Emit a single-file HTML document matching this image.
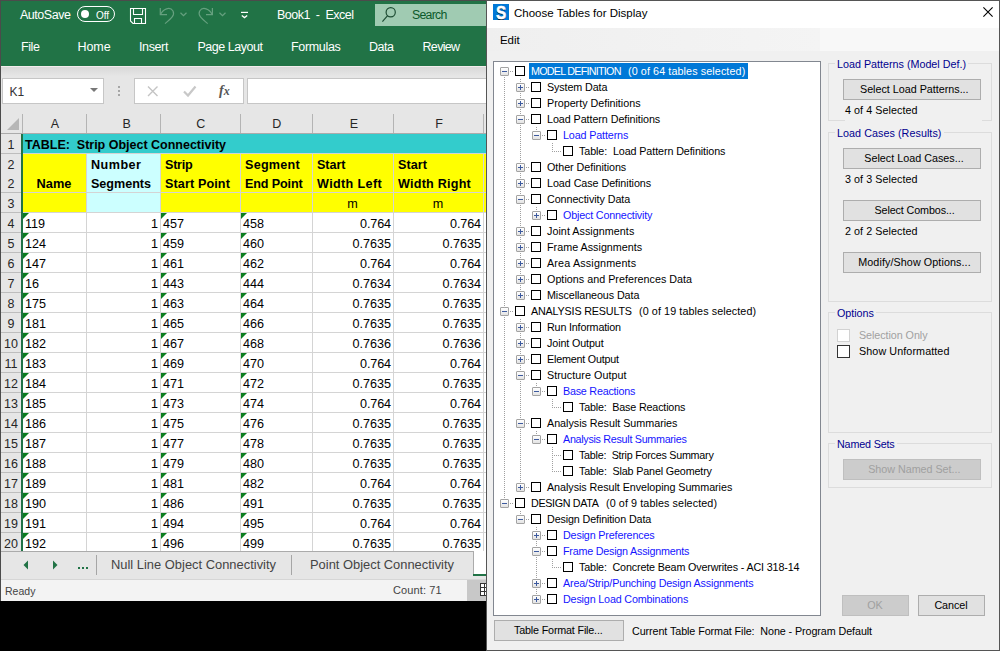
<!DOCTYPE html><html><head><meta charset="utf-8"><style>
html,body{margin:0;padding:0;}
body{width:1000px;height:651px;position:relative;overflow:hidden;background:#000;font-family:"Liberation Sans",sans-serif;}
.t{position:absolute;white-space:pre;}
.r{position:absolute;box-sizing:border-box;}
svg{position:absolute;}
</style></head><body>
<div class="r" style="left:0px;top:0px;width:1000px;height:1px;background:#4b4b4b;"></div>
<div class="r" style="left:0px;top:0px;width:1px;height:601px;background:#4b4b4b;"></div>
<div class="r" style="left:1px;top:1px;width:485px;height:65px;background:#217346;"></div>
<div class="t" style="left:20px;top:8.95px;font-size:12.5px;line-height:12.5px;color:#fff;letter-spacing:-0.465px;">AutoSave</div>
<div class="r" style="left:77px;top:6px;width:38px;height:16px;background:transparent;border:1px solid #fff;border-radius:8px;"></div>
<div class="r" style="left:81px;top:10px;width:8px;height:8px;background:#fff;border-radius:50%;"></div>
<div class="t" style="left:96px;top:10.50px;font-size:10px;line-height:10px;color:#fff;letter-spacing:-0.052px;">Off</div>
<svg style="left:125px;top:3px" width="25" height="25" viewBox="0 0 25 25"><path d="M5.5 5.5H20.5V20.5H8L5.5 18Z" fill="none" stroke="#fff" stroke-width="1.1"/><path d="M8.5 5.5V11.5H17.5V5.5" fill="none" stroke="#fff" stroke-width="1.1"/><path d="M9.5 20.5V15.5H16.5V20.5" fill="none" stroke="#fff" stroke-width="1.1"/></svg>
<svg style="left:155px;top:3px" width="75" height="25" viewBox="0 0 75 25"><g fill="none" stroke="#66a07f" stroke-width="1.2"><path d="M5.3 5V11.6H12"/><path d="M5.5 11.5C8 6 15 3 18 8C20 12 17 15 10 20.6"/><path d="M25.5 9.75L28.5 12.75L31.5 9.75"/><path d="M57.4 5V11.6H51"/><path d="M57.2 11.5C54.7 6 47.7 3 44.7 8C42.7 12 45.7 15 52.7 20.6"/><path d="M64.5 9.75L67.5 12.75L70.5 9.75"/></g></svg>
<svg style="left:235px;top:5px" width="20" height="20" viewBox="0 0 20 20"><path d="M6 7.4H13" stroke="#fff" stroke-width="1.2"/><path d="M6.8 10.5L9.5 12.6L12.2 10.5" fill="none" stroke="#fff" stroke-width="1.3"/></svg>
<div class="t" style="left:277px;top:8.95px;font-size:12.5px;line-height:12.5px;color:#fff;letter-spacing:-0.505px;">Book1  -  Excel</div>
<div class="r" style="left:375px;top:4px;width:111px;height:22px;background:#a0cbb2;"></div>
<svg style="left:381px;top:5px" width="18" height="19" viewBox="0 0 18 19"><circle cx="9.7" cy="7.2" r="4.6" fill="none" stroke="#1e4d34" stroke-width="1.2"/><path d="M6.6 10.6L1.4 16.6" stroke="#1e4d34" stroke-width="1.2"/></svg>
<div class="t" style="left:412px;top:9.35px;font-size:12.3px;line-height:12.3px;color:#0c5a2b;letter-spacing:-0.745px;">Search</div>
<div class="t" style="left:21px;top:40.55px;font-size:12.5px;line-height:12.5px;color:#fff;letter-spacing:-0.414px;">File</div>
<div class="t" style="left:77.5px;top:40.55px;font-size:12.5px;line-height:12.5px;color:#fff;letter-spacing:-0.086px;">Home</div>
<div class="t" style="left:139px;top:40.55px;font-size:12.5px;line-height:12.5px;color:#fff;letter-spacing:-0.378px;">Insert</div>
<div class="t" style="left:197.5px;top:40.55px;font-size:12.5px;line-height:12.5px;color:#fff;letter-spacing:-0.473px;">Page Layout</div>
<div class="t" style="left:291px;top:40.55px;font-size:12.5px;line-height:12.5px;color:#fff;letter-spacing:-0.324px;">Formulas</div>
<div class="t" style="left:369px;top:40.55px;font-size:12.5px;line-height:12.5px;color:#fff;letter-spacing:-0.477px;">Data</div>
<div class="t" style="left:422.5px;top:40.55px;font-size:12.5px;line-height:12.5px;color:#fff;letter-spacing:-0.667px;">Review</div>
<div class="r" style="left:1px;top:66px;width:485px;height:48px;background:#e6e6e6;"></div>
<div class="r" style="left:1px;top:66px;width:485px;height:1px;background:#f2ecec;"></div>
<div class="r" style="left:1px;top:67px;width:485px;height:9px;background:linear-gradient(#d8d8d8,#e6e6e6)"></div>
<div class="r" style="left:2px;top:78px;width:102px;height:26px;background:#fff;border:1px solid #c6c6c6;"></div>
<div class="t" style="left:9.5px;top:85.50px;font-size:12px;line-height:12px;color:#333;">K1</div>
<svg style="left:89px;top:87px" width="10" height="6" viewBox="0 0 10 6"><path d="M1 1h8l-4 4z" fill="#777"/></svg>
<div class="r" style="left:118px;top:86px;width:2px;height:2px;background:#a6a6a6;"></div>
<div class="r" style="left:118px;top:90px;width:2px;height:2px;background:#a6a6a6;"></div>
<div class="r" style="left:118px;top:94px;width:2px;height:2px;background:#a6a6a6;"></div>
<div class="r" style="left:134px;top:78px;width:110px;height:26px;background:#fff;border:1px solid #c6c6c6;"></div>
<svg style="left:146px;top:84px" width="14" height="14" viewBox="0 0 14 14"><path d="M2 2.5l9.5 9.5M11.5 2.5L2 12" stroke="#c4c4c4" stroke-width="1.4"/></svg>
<svg style="left:181px;top:84px" width="16" height="14" viewBox="0 0 16 14"><path d="M3 7.5l4 4L14.5 2.5" fill="none" stroke="#c8c8c8" stroke-width="2.2"/></svg>
<div class="t" style="left:219px;top:84.00px;font-size:14px;line-height:14px;color:#555;font-weight:bold;font-style:italic;font-family:'Liberation Serif',serif;">f<span style="font-size:12px">x</span></div>
<div class="r" style="left:247px;top:78px;width:240px;height:26px;background:#fff;border:1px solid #c6c6c6;"></div>
<div class="r" style="left:1px;top:114px;width:485px;height:20px;background:#e6e6e6;"></div>
<div class="r" style="left:1px;top:133px;width:485px;height:1px;background:#ababab;"></div>
<svg style="left:6px;top:117px" width="14" height="14" viewBox="0 0 14 14"><path d="M13 1v12H1z" fill="#b6b6b6"/></svg>
<div class="r" style="left:22px;top:114px;width:1px;height:19px;background:#b4b4b4;"></div>
<div class="r" style="left:86px;top:114px;width:1px;height:19px;background:#b4b4b4;"></div>
<div class="r" style="left:160px;top:114px;width:1px;height:19px;background:#b4b4b4;"></div>
<div class="r" style="left:240px;top:114px;width:1px;height:19px;background:#b4b4b4;"></div>
<div class="r" style="left:312px;top:114px;width:1px;height:19px;background:#b4b4b4;"></div>
<div class="r" style="left:393px;top:114px;width:1px;height:19px;background:#b4b4b4;"></div>
<div class="r" style="left:483px;top:114px;width:1px;height:19px;background:#b4b4b4;"></div>
<div class="t" style="left:23.5px;top:118.25px;font-size:12.5px;line-height:12.5px;color:#262626;width:63px;text-align:center;">A</div>
<div class="t" style="left:90.2px;top:118.25px;font-size:12.5px;line-height:12.5px;color:#262626;width:73px;text-align:center;">B</div>
<div class="t" style="left:161.3px;top:118.25px;font-size:12.5px;line-height:12.5px;color:#262626;width:79px;text-align:center;">C</div>
<div class="t" style="left:241.2px;top:118.25px;font-size:12.5px;line-height:12.5px;color:#262626;width:71px;text-align:center;">D</div>
<div class="t" style="left:314px;top:118.25px;font-size:12.5px;line-height:12.5px;color:#262626;width:80px;text-align:center;">E</div>
<div class="t" style="left:394.5px;top:118.25px;font-size:12.5px;line-height:12.5px;color:#262626;width:89px;text-align:center;">F</div>
<div class="r" style="left:1px;top:134px;width:21px;height:418px;background:#e6e6e6;"></div>
<div class="r" style="left:21px;top:134px;width:1px;height:418px;background:#bdbdbd;"></div>
<div class="r" style="left:22px;top:134px;width:464px;height:418px;background:#fff;"></div>
<div class="r" style="left:22px;top:134px;width:464px;height:19px;background:#33cccc;"></div>
<div class="r" style="left:22px;top:154px;width:464px;height:38px;background:#ffff00;"></div>
<div class="r" style="left:86px;top:154px;width:74px;height:38px;background:#ccffff;"></div>
<div class="r" style="left:22px;top:193px;width:464px;height:19px;background:#ffff00;"></div>
<div class="r" style="left:86px;top:193px;width:74px;height:19px;background:#ccffff;"></div>
<div class="r" style="left:22px;top:153px;width:464px;height:1px;background:#d4d4d4;"></div>
<div class="r" style="left:1px;top:153px;width:21px;height:1px;background:#bdbdbd;"></div>
<div class="r" style="left:22px;top:192px;width:464px;height:1px;background:#d4d4d4;"></div>
<div class="r" style="left:1px;top:192px;width:21px;height:1px;background:#bdbdbd;"></div>
<div class="r" style="left:22px;top:212px;width:464px;height:1px;background:#d4d4d4;"></div>
<div class="r" style="left:1px;top:212px;width:21px;height:1px;background:#bdbdbd;"></div>
<div class="r" style="left:22px;top:232px;width:464px;height:1px;background:#d4d4d4;"></div>
<div class="r" style="left:1px;top:232px;width:21px;height:1px;background:#bdbdbd;"></div>
<div class="r" style="left:22px;top:252px;width:464px;height:1px;background:#d4d4d4;"></div>
<div class="r" style="left:1px;top:252px;width:21px;height:1px;background:#bdbdbd;"></div>
<div class="r" style="left:22px;top:272px;width:464px;height:1px;background:#d4d4d4;"></div>
<div class="r" style="left:1px;top:272px;width:21px;height:1px;background:#bdbdbd;"></div>
<div class="r" style="left:22px;top:292px;width:464px;height:1px;background:#d4d4d4;"></div>
<div class="r" style="left:1px;top:292px;width:21px;height:1px;background:#bdbdbd;"></div>
<div class="r" style="left:22px;top:312px;width:464px;height:1px;background:#d4d4d4;"></div>
<div class="r" style="left:1px;top:312px;width:21px;height:1px;background:#bdbdbd;"></div>
<div class="r" style="left:22px;top:332px;width:464px;height:1px;background:#d4d4d4;"></div>
<div class="r" style="left:1px;top:332px;width:21px;height:1px;background:#bdbdbd;"></div>
<div class="r" style="left:22px;top:352px;width:464px;height:1px;background:#d4d4d4;"></div>
<div class="r" style="left:1px;top:352px;width:21px;height:1px;background:#bdbdbd;"></div>
<div class="r" style="left:22px;top:372px;width:464px;height:1px;background:#d4d4d4;"></div>
<div class="r" style="left:1px;top:372px;width:21px;height:1px;background:#bdbdbd;"></div>
<div class="r" style="left:22px;top:392px;width:464px;height:1px;background:#d4d4d4;"></div>
<div class="r" style="left:1px;top:392px;width:21px;height:1px;background:#bdbdbd;"></div>
<div class="r" style="left:22px;top:412px;width:464px;height:1px;background:#d4d4d4;"></div>
<div class="r" style="left:1px;top:412px;width:21px;height:1px;background:#bdbdbd;"></div>
<div class="r" style="left:22px;top:432px;width:464px;height:1px;background:#d4d4d4;"></div>
<div class="r" style="left:1px;top:432px;width:21px;height:1px;background:#bdbdbd;"></div>
<div class="r" style="left:22px;top:452px;width:464px;height:1px;background:#d4d4d4;"></div>
<div class="r" style="left:1px;top:452px;width:21px;height:1px;background:#bdbdbd;"></div>
<div class="r" style="left:22px;top:472px;width:464px;height:1px;background:#d4d4d4;"></div>
<div class="r" style="left:1px;top:472px;width:21px;height:1px;background:#bdbdbd;"></div>
<div class="r" style="left:22px;top:492px;width:464px;height:1px;background:#d4d4d4;"></div>
<div class="r" style="left:1px;top:492px;width:21px;height:1px;background:#bdbdbd;"></div>
<div class="r" style="left:22px;top:512px;width:464px;height:1px;background:#d4d4d4;"></div>
<div class="r" style="left:1px;top:512px;width:21px;height:1px;background:#bdbdbd;"></div>
<div class="r" style="left:22px;top:532px;width:464px;height:1px;background:#d4d4d4;"></div>
<div class="r" style="left:1px;top:532px;width:21px;height:1px;background:#bdbdbd;"></div>
<div class="r" style="left:22px;top:552px;width:464px;height:1px;background:#d4d4d4;"></div>
<div class="r" style="left:1px;top:552px;width:21px;height:1px;background:#bdbdbd;"></div>
<div class="r" style="left:86px;top:154px;width:1px;height:398px;background:#d4d4d4;"></div>
<div class="r" style="left:160px;top:154px;width:1px;height:398px;background:#d4d4d4;"></div>
<div class="r" style="left:240px;top:154px;width:1px;height:398px;background:#d4d4d4;"></div>
<div class="r" style="left:312px;top:154px;width:1px;height:398px;background:#d4d4d4;"></div>
<div class="r" style="left:393px;top:154px;width:1px;height:398px;background:#d4d4d4;"></div>
<div class="r" style="left:483px;top:154px;width:1px;height:398px;background:#d4d4d4;"></div>
<div class="t" style="left:1px;top:139.45px;font-size:12.5px;line-height:12.5px;color:#262626;width:20px;text-align:center;">1</div>
<div class="t" style="left:1px;top:159.25px;font-size:12.5px;line-height:12.5px;color:#262626;width:20px;text-align:center;">2</div>
<div class="t" style="left:1px;top:178.25px;font-size:12.5px;line-height:12.5px;color:#262626;width:20px;text-align:center;">2</div>
<div class="t" style="left:1px;top:198.45px;font-size:12.5px;line-height:12.5px;color:#262626;width:20px;text-align:center;">3</div>
<div class="t" style="left:1px;top:218.45px;font-size:12.5px;line-height:12.5px;color:#262626;width:20px;text-align:center;">4</div>
<div class="t" style="left:1px;top:238.45px;font-size:12.5px;line-height:12.5px;color:#262626;width:20px;text-align:center;">5</div>
<div class="t" style="left:1px;top:258.45px;font-size:12.5px;line-height:12.5px;color:#262626;width:20px;text-align:center;">6</div>
<div class="t" style="left:1px;top:278.45px;font-size:12.5px;line-height:12.5px;color:#262626;width:20px;text-align:center;">7</div>
<div class="t" style="left:1px;top:298.45px;font-size:12.5px;line-height:12.5px;color:#262626;width:20px;text-align:center;">8</div>
<div class="t" style="left:1px;top:318.45px;font-size:12.5px;line-height:12.5px;color:#262626;width:20px;text-align:center;">9</div>
<div class="t" style="left:1px;top:338.45px;font-size:12.5px;line-height:12.5px;color:#262626;width:20px;text-align:center;">10</div>
<div class="t" style="left:1px;top:358.45px;font-size:12.5px;line-height:12.5px;color:#262626;width:20px;text-align:center;">11</div>
<div class="t" style="left:1px;top:378.45px;font-size:12.5px;line-height:12.5px;color:#262626;width:20px;text-align:center;">12</div>
<div class="t" style="left:1px;top:398.45px;font-size:12.5px;line-height:12.5px;color:#262626;width:20px;text-align:center;">13</div>
<div class="t" style="left:1px;top:418.45px;font-size:12.5px;line-height:12.5px;color:#262626;width:20px;text-align:center;">14</div>
<div class="t" style="left:1px;top:438.45px;font-size:12.5px;line-height:12.5px;color:#262626;width:20px;text-align:center;">15</div>
<div class="t" style="left:1px;top:458.45px;font-size:12.5px;line-height:12.5px;color:#262626;width:20px;text-align:center;">16</div>
<div class="t" style="left:1px;top:478.45px;font-size:12.5px;line-height:12.5px;color:#262626;width:20px;text-align:center;">17</div>
<div class="t" style="left:1px;top:498.45px;font-size:12.5px;line-height:12.5px;color:#262626;width:20px;text-align:center;">18</div>
<div class="t" style="left:1px;top:518.45px;font-size:12.5px;line-height:12.5px;color:#262626;width:20px;text-align:center;">19</div>
<div class="t" style="left:1px;top:538.45px;font-size:12.5px;line-height:12.5px;color:#262626;width:20px;text-align:center;">20</div>
<div class="t" style="left:25px;top:139.25px;font-size:12.5px;line-height:12.5px;color:#000;font-weight:bold;letter-spacing:-0.005px;">TABLE:  Strip Object Connectivity</div>
<div class="t" style="left:22px;top:178.10px;font-size:12.8px;line-height:12.8px;color:#000;font-weight:bold;width:64px;text-align:center;letter-spacing:0.035px;">Name</div>
<div class="t" style="left:91px;top:158.70px;font-size:12.6px;line-height:12.6px;color:#000;font-weight:bold;letter-spacing:0.484px;">Number</div>
<div class="t" style="left:91px;top:178.20px;font-size:12.6px;line-height:12.6px;color:#000;font-weight:bold;letter-spacing:-0.025px;">Segments</div>
<div class="t" style="left:165px;top:158.70px;font-size:12.6px;line-height:12.6px;color:#000;font-weight:bold;letter-spacing:-0.237px;">Strip</div>
<div class="t" style="left:165px;top:178.20px;font-size:12.6px;line-height:12.6px;color:#000;font-weight:bold;letter-spacing:0.121px;">Start Point</div>
<div class="t" style="left:245px;top:158.70px;font-size:12.6px;line-height:12.6px;color:#000;font-weight:bold;letter-spacing:0.259px;">Segment</div>
<div class="t" style="left:245px;top:178.20px;font-size:12.6px;line-height:12.6px;color:#000;font-weight:bold;letter-spacing:-0.141px;">End Point</div>
<div class="t" style="left:317px;top:158.70px;font-size:12.6px;line-height:12.6px;color:#000;font-weight:bold;letter-spacing:-0.041px;">Start</div>
<div class="t" style="left:317px;top:178.20px;font-size:12.6px;line-height:12.6px;color:#000;font-weight:bold;letter-spacing:0.355px;">Width Left</div>
<div class="t" style="left:398px;top:158.70px;font-size:12.6px;line-height:12.6px;color:#000;font-weight:bold;letter-spacing:0.059px;">Start</div>
<div class="t" style="left:398px;top:178.20px;font-size:12.6px;line-height:12.6px;color:#000;font-weight:bold;letter-spacing:0.224px;">Width Right</div>
<div class="t" style="left:312px;top:197.70px;font-size:12.6px;line-height:12.6px;color:#000;width:81px;text-align:center;">m</div>
<div class="t" style="left:393px;top:197.70px;font-size:12.6px;line-height:12.6px;color:#000;width:90px;text-align:center;">m</div>
<div class="t" style="left:25px;top:217.70px;font-size:12.6px;line-height:12.6px;color:#000;">119</div>
<div class="t" style="left:86px;top:217.70px;font-size:12.6px;line-height:12.6px;color:#000;width:72px;text-align:right;">1</div>
<div class="t" style="left:163px;top:217.70px;font-size:12.6px;line-height:12.6px;color:#000;">457</div>
<div class="t" style="left:243px;top:217.70px;font-size:12.6px;line-height:12.6px;color:#000;">458</div>
<div class="t" style="left:312px;top:217.70px;font-size:12.6px;line-height:12.6px;color:#000;width:79px;text-align:right;letter-spacing:-0.103px;">0.764</div>
<div class="t" style="left:393px;top:217.70px;font-size:12.6px;line-height:12.6px;color:#000;width:88px;text-align:right;letter-spacing:-0.103px;">0.764</div>
<svg style="left:23px;top:213px" width="7" height="7" viewBox="0 0 7 7"><path d="M0 0h6L0 6z" fill="#0b7d1f"/></svg>
<svg style="left:161px;top:213px" width="7" height="7" viewBox="0 0 7 7"><path d="M0 0h6L0 6z" fill="#0b7d1f"/></svg>
<svg style="left:241px;top:213px" width="7" height="7" viewBox="0 0 7 7"><path d="M0 0h6L0 6z" fill="#0b7d1f"/></svg>
<div class="t" style="left:25px;top:237.70px;font-size:12.6px;line-height:12.6px;color:#000;">124</div>
<div class="t" style="left:86px;top:237.70px;font-size:12.6px;line-height:12.6px;color:#000;width:72px;text-align:right;">1</div>
<div class="t" style="left:163px;top:237.70px;font-size:12.6px;line-height:12.6px;color:#000;">459</div>
<div class="t" style="left:243px;top:237.70px;font-size:12.6px;line-height:12.6px;color:#000;">460</div>
<div class="t" style="left:312px;top:237.70px;font-size:12.6px;line-height:12.6px;color:#000;width:79px;text-align:right;letter-spacing:-0.005px;">0.7635</div>
<div class="t" style="left:393px;top:237.70px;font-size:12.6px;line-height:12.6px;color:#000;width:88px;text-align:right;letter-spacing:-0.005px;">0.7635</div>
<svg style="left:23px;top:233px" width="7" height="7" viewBox="0 0 7 7"><path d="M0 0h6L0 6z" fill="#0b7d1f"/></svg>
<svg style="left:161px;top:233px" width="7" height="7" viewBox="0 0 7 7"><path d="M0 0h6L0 6z" fill="#0b7d1f"/></svg>
<svg style="left:241px;top:233px" width="7" height="7" viewBox="0 0 7 7"><path d="M0 0h6L0 6z" fill="#0b7d1f"/></svg>
<div class="t" style="left:25px;top:257.70px;font-size:12.6px;line-height:12.6px;color:#000;">147</div>
<div class="t" style="left:86px;top:257.70px;font-size:12.6px;line-height:12.6px;color:#000;width:72px;text-align:right;">1</div>
<div class="t" style="left:163px;top:257.70px;font-size:12.6px;line-height:12.6px;color:#000;">461</div>
<div class="t" style="left:243px;top:257.70px;font-size:12.6px;line-height:12.6px;color:#000;">462</div>
<div class="t" style="left:312px;top:257.70px;font-size:12.6px;line-height:12.6px;color:#000;width:79px;text-align:right;letter-spacing:-0.103px;">0.764</div>
<div class="t" style="left:393px;top:257.70px;font-size:12.6px;line-height:12.6px;color:#000;width:88px;text-align:right;letter-spacing:-0.103px;">0.764</div>
<svg style="left:23px;top:253px" width="7" height="7" viewBox="0 0 7 7"><path d="M0 0h6L0 6z" fill="#0b7d1f"/></svg>
<svg style="left:161px;top:253px" width="7" height="7" viewBox="0 0 7 7"><path d="M0 0h6L0 6z" fill="#0b7d1f"/></svg>
<svg style="left:241px;top:253px" width="7" height="7" viewBox="0 0 7 7"><path d="M0 0h6L0 6z" fill="#0b7d1f"/></svg>
<div class="t" style="left:25px;top:277.70px;font-size:12.6px;line-height:12.6px;color:#000;">16</div>
<div class="t" style="left:86px;top:277.70px;font-size:12.6px;line-height:12.6px;color:#000;width:72px;text-align:right;">1</div>
<div class="t" style="left:163px;top:277.70px;font-size:12.6px;line-height:12.6px;color:#000;">443</div>
<div class="t" style="left:243px;top:277.70px;font-size:12.6px;line-height:12.6px;color:#000;">444</div>
<div class="t" style="left:312px;top:277.70px;font-size:12.6px;line-height:12.6px;color:#000;width:79px;text-align:right;letter-spacing:-0.005px;">0.7634</div>
<div class="t" style="left:393px;top:277.70px;font-size:12.6px;line-height:12.6px;color:#000;width:88px;text-align:right;letter-spacing:-0.005px;">0.7634</div>
<svg style="left:23px;top:273px" width="7" height="7" viewBox="0 0 7 7"><path d="M0 0h6L0 6z" fill="#0b7d1f"/></svg>
<svg style="left:161px;top:273px" width="7" height="7" viewBox="0 0 7 7"><path d="M0 0h6L0 6z" fill="#0b7d1f"/></svg>
<svg style="left:241px;top:273px" width="7" height="7" viewBox="0 0 7 7"><path d="M0 0h6L0 6z" fill="#0b7d1f"/></svg>
<div class="t" style="left:25px;top:297.70px;font-size:12.6px;line-height:12.6px;color:#000;">175</div>
<div class="t" style="left:86px;top:297.70px;font-size:12.6px;line-height:12.6px;color:#000;width:72px;text-align:right;">1</div>
<div class="t" style="left:163px;top:297.70px;font-size:12.6px;line-height:12.6px;color:#000;">463</div>
<div class="t" style="left:243px;top:297.70px;font-size:12.6px;line-height:12.6px;color:#000;">464</div>
<div class="t" style="left:312px;top:297.70px;font-size:12.6px;line-height:12.6px;color:#000;width:79px;text-align:right;letter-spacing:-0.005px;">0.7635</div>
<div class="t" style="left:393px;top:297.70px;font-size:12.6px;line-height:12.6px;color:#000;width:88px;text-align:right;letter-spacing:-0.005px;">0.7635</div>
<svg style="left:23px;top:293px" width="7" height="7" viewBox="0 0 7 7"><path d="M0 0h6L0 6z" fill="#0b7d1f"/></svg>
<svg style="left:161px;top:293px" width="7" height="7" viewBox="0 0 7 7"><path d="M0 0h6L0 6z" fill="#0b7d1f"/></svg>
<svg style="left:241px;top:293px" width="7" height="7" viewBox="0 0 7 7"><path d="M0 0h6L0 6z" fill="#0b7d1f"/></svg>
<div class="t" style="left:25px;top:317.70px;font-size:12.6px;line-height:12.6px;color:#000;">181</div>
<div class="t" style="left:86px;top:317.70px;font-size:12.6px;line-height:12.6px;color:#000;width:72px;text-align:right;">1</div>
<div class="t" style="left:163px;top:317.70px;font-size:12.6px;line-height:12.6px;color:#000;">465</div>
<div class="t" style="left:243px;top:317.70px;font-size:12.6px;line-height:12.6px;color:#000;">466</div>
<div class="t" style="left:312px;top:317.70px;font-size:12.6px;line-height:12.6px;color:#000;width:79px;text-align:right;letter-spacing:-0.005px;">0.7635</div>
<div class="t" style="left:393px;top:317.70px;font-size:12.6px;line-height:12.6px;color:#000;width:88px;text-align:right;letter-spacing:-0.005px;">0.7635</div>
<svg style="left:23px;top:313px" width="7" height="7" viewBox="0 0 7 7"><path d="M0 0h6L0 6z" fill="#0b7d1f"/></svg>
<svg style="left:161px;top:313px" width="7" height="7" viewBox="0 0 7 7"><path d="M0 0h6L0 6z" fill="#0b7d1f"/></svg>
<svg style="left:241px;top:313px" width="7" height="7" viewBox="0 0 7 7"><path d="M0 0h6L0 6z" fill="#0b7d1f"/></svg>
<div class="t" style="left:25px;top:337.70px;font-size:12.6px;line-height:12.6px;color:#000;">182</div>
<div class="t" style="left:86px;top:337.70px;font-size:12.6px;line-height:12.6px;color:#000;width:72px;text-align:right;">1</div>
<div class="t" style="left:163px;top:337.70px;font-size:12.6px;line-height:12.6px;color:#000;">467</div>
<div class="t" style="left:243px;top:337.70px;font-size:12.6px;line-height:12.6px;color:#000;">468</div>
<div class="t" style="left:312px;top:337.70px;font-size:12.6px;line-height:12.6px;color:#000;width:79px;text-align:right;letter-spacing:-0.005px;">0.7636</div>
<div class="t" style="left:393px;top:337.70px;font-size:12.6px;line-height:12.6px;color:#000;width:88px;text-align:right;letter-spacing:-0.005px;">0.7636</div>
<svg style="left:23px;top:333px" width="7" height="7" viewBox="0 0 7 7"><path d="M0 0h6L0 6z" fill="#0b7d1f"/></svg>
<svg style="left:161px;top:333px" width="7" height="7" viewBox="0 0 7 7"><path d="M0 0h6L0 6z" fill="#0b7d1f"/></svg>
<svg style="left:241px;top:333px" width="7" height="7" viewBox="0 0 7 7"><path d="M0 0h6L0 6z" fill="#0b7d1f"/></svg>
<div class="t" style="left:25px;top:357.70px;font-size:12.6px;line-height:12.6px;color:#000;">183</div>
<div class="t" style="left:86px;top:357.70px;font-size:12.6px;line-height:12.6px;color:#000;width:72px;text-align:right;">1</div>
<div class="t" style="left:163px;top:357.70px;font-size:12.6px;line-height:12.6px;color:#000;">469</div>
<div class="t" style="left:243px;top:357.70px;font-size:12.6px;line-height:12.6px;color:#000;">470</div>
<div class="t" style="left:312px;top:357.70px;font-size:12.6px;line-height:12.6px;color:#000;width:79px;text-align:right;letter-spacing:-0.103px;">0.764</div>
<div class="t" style="left:393px;top:357.70px;font-size:12.6px;line-height:12.6px;color:#000;width:88px;text-align:right;letter-spacing:-0.103px;">0.764</div>
<svg style="left:23px;top:353px" width="7" height="7" viewBox="0 0 7 7"><path d="M0 0h6L0 6z" fill="#0b7d1f"/></svg>
<svg style="left:161px;top:353px" width="7" height="7" viewBox="0 0 7 7"><path d="M0 0h6L0 6z" fill="#0b7d1f"/></svg>
<svg style="left:241px;top:353px" width="7" height="7" viewBox="0 0 7 7"><path d="M0 0h6L0 6z" fill="#0b7d1f"/></svg>
<div class="t" style="left:25px;top:377.70px;font-size:12.6px;line-height:12.6px;color:#000;">184</div>
<div class="t" style="left:86px;top:377.70px;font-size:12.6px;line-height:12.6px;color:#000;width:72px;text-align:right;">1</div>
<div class="t" style="left:163px;top:377.70px;font-size:12.6px;line-height:12.6px;color:#000;">471</div>
<div class="t" style="left:243px;top:377.70px;font-size:12.6px;line-height:12.6px;color:#000;">472</div>
<div class="t" style="left:312px;top:377.70px;font-size:12.6px;line-height:12.6px;color:#000;width:79px;text-align:right;letter-spacing:-0.005px;">0.7635</div>
<div class="t" style="left:393px;top:377.70px;font-size:12.6px;line-height:12.6px;color:#000;width:88px;text-align:right;letter-spacing:-0.005px;">0.7635</div>
<svg style="left:23px;top:373px" width="7" height="7" viewBox="0 0 7 7"><path d="M0 0h6L0 6z" fill="#0b7d1f"/></svg>
<svg style="left:161px;top:373px" width="7" height="7" viewBox="0 0 7 7"><path d="M0 0h6L0 6z" fill="#0b7d1f"/></svg>
<svg style="left:241px;top:373px" width="7" height="7" viewBox="0 0 7 7"><path d="M0 0h6L0 6z" fill="#0b7d1f"/></svg>
<div class="t" style="left:25px;top:397.70px;font-size:12.6px;line-height:12.6px;color:#000;">185</div>
<div class="t" style="left:86px;top:397.70px;font-size:12.6px;line-height:12.6px;color:#000;width:72px;text-align:right;">1</div>
<div class="t" style="left:163px;top:397.70px;font-size:12.6px;line-height:12.6px;color:#000;">473</div>
<div class="t" style="left:243px;top:397.70px;font-size:12.6px;line-height:12.6px;color:#000;">474</div>
<div class="t" style="left:312px;top:397.70px;font-size:12.6px;line-height:12.6px;color:#000;width:79px;text-align:right;letter-spacing:-0.103px;">0.764</div>
<div class="t" style="left:393px;top:397.70px;font-size:12.6px;line-height:12.6px;color:#000;width:88px;text-align:right;letter-spacing:-0.103px;">0.764</div>
<svg style="left:23px;top:393px" width="7" height="7" viewBox="0 0 7 7"><path d="M0 0h6L0 6z" fill="#0b7d1f"/></svg>
<svg style="left:161px;top:393px" width="7" height="7" viewBox="0 0 7 7"><path d="M0 0h6L0 6z" fill="#0b7d1f"/></svg>
<svg style="left:241px;top:393px" width="7" height="7" viewBox="0 0 7 7"><path d="M0 0h6L0 6z" fill="#0b7d1f"/></svg>
<div class="t" style="left:25px;top:417.70px;font-size:12.6px;line-height:12.6px;color:#000;">186</div>
<div class="t" style="left:86px;top:417.70px;font-size:12.6px;line-height:12.6px;color:#000;width:72px;text-align:right;">1</div>
<div class="t" style="left:163px;top:417.70px;font-size:12.6px;line-height:12.6px;color:#000;">475</div>
<div class="t" style="left:243px;top:417.70px;font-size:12.6px;line-height:12.6px;color:#000;">476</div>
<div class="t" style="left:312px;top:417.70px;font-size:12.6px;line-height:12.6px;color:#000;width:79px;text-align:right;letter-spacing:-0.005px;">0.7635</div>
<div class="t" style="left:393px;top:417.70px;font-size:12.6px;line-height:12.6px;color:#000;width:88px;text-align:right;letter-spacing:-0.005px;">0.7635</div>
<svg style="left:23px;top:413px" width="7" height="7" viewBox="0 0 7 7"><path d="M0 0h6L0 6z" fill="#0b7d1f"/></svg>
<svg style="left:161px;top:413px" width="7" height="7" viewBox="0 0 7 7"><path d="M0 0h6L0 6z" fill="#0b7d1f"/></svg>
<svg style="left:241px;top:413px" width="7" height="7" viewBox="0 0 7 7"><path d="M0 0h6L0 6z" fill="#0b7d1f"/></svg>
<div class="t" style="left:25px;top:437.70px;font-size:12.6px;line-height:12.6px;color:#000;">187</div>
<div class="t" style="left:86px;top:437.70px;font-size:12.6px;line-height:12.6px;color:#000;width:72px;text-align:right;">1</div>
<div class="t" style="left:163px;top:437.70px;font-size:12.6px;line-height:12.6px;color:#000;">477</div>
<div class="t" style="left:243px;top:437.70px;font-size:12.6px;line-height:12.6px;color:#000;">478</div>
<div class="t" style="left:312px;top:437.70px;font-size:12.6px;line-height:12.6px;color:#000;width:79px;text-align:right;letter-spacing:-0.005px;">0.7635</div>
<div class="t" style="left:393px;top:437.70px;font-size:12.6px;line-height:12.6px;color:#000;width:88px;text-align:right;letter-spacing:-0.005px;">0.7635</div>
<svg style="left:23px;top:433px" width="7" height="7" viewBox="0 0 7 7"><path d="M0 0h6L0 6z" fill="#0b7d1f"/></svg>
<svg style="left:161px;top:433px" width="7" height="7" viewBox="0 0 7 7"><path d="M0 0h6L0 6z" fill="#0b7d1f"/></svg>
<svg style="left:241px;top:433px" width="7" height="7" viewBox="0 0 7 7"><path d="M0 0h6L0 6z" fill="#0b7d1f"/></svg>
<div class="t" style="left:25px;top:457.70px;font-size:12.6px;line-height:12.6px;color:#000;">188</div>
<div class="t" style="left:86px;top:457.70px;font-size:12.6px;line-height:12.6px;color:#000;width:72px;text-align:right;">1</div>
<div class="t" style="left:163px;top:457.70px;font-size:12.6px;line-height:12.6px;color:#000;">479</div>
<div class="t" style="left:243px;top:457.70px;font-size:12.6px;line-height:12.6px;color:#000;">480</div>
<div class="t" style="left:312px;top:457.70px;font-size:12.6px;line-height:12.6px;color:#000;width:79px;text-align:right;letter-spacing:-0.005px;">0.7635</div>
<div class="t" style="left:393px;top:457.70px;font-size:12.6px;line-height:12.6px;color:#000;width:88px;text-align:right;letter-spacing:-0.005px;">0.7635</div>
<svg style="left:23px;top:453px" width="7" height="7" viewBox="0 0 7 7"><path d="M0 0h6L0 6z" fill="#0b7d1f"/></svg>
<svg style="left:161px;top:453px" width="7" height="7" viewBox="0 0 7 7"><path d="M0 0h6L0 6z" fill="#0b7d1f"/></svg>
<svg style="left:241px;top:453px" width="7" height="7" viewBox="0 0 7 7"><path d="M0 0h6L0 6z" fill="#0b7d1f"/></svg>
<div class="t" style="left:25px;top:477.70px;font-size:12.6px;line-height:12.6px;color:#000;">189</div>
<div class="t" style="left:86px;top:477.70px;font-size:12.6px;line-height:12.6px;color:#000;width:72px;text-align:right;">1</div>
<div class="t" style="left:163px;top:477.70px;font-size:12.6px;line-height:12.6px;color:#000;">481</div>
<div class="t" style="left:243px;top:477.70px;font-size:12.6px;line-height:12.6px;color:#000;">482</div>
<div class="t" style="left:312px;top:477.70px;font-size:12.6px;line-height:12.6px;color:#000;width:79px;text-align:right;letter-spacing:-0.103px;">0.764</div>
<div class="t" style="left:393px;top:477.70px;font-size:12.6px;line-height:12.6px;color:#000;width:88px;text-align:right;letter-spacing:-0.103px;">0.764</div>
<svg style="left:23px;top:473px" width="7" height="7" viewBox="0 0 7 7"><path d="M0 0h6L0 6z" fill="#0b7d1f"/></svg>
<svg style="left:161px;top:473px" width="7" height="7" viewBox="0 0 7 7"><path d="M0 0h6L0 6z" fill="#0b7d1f"/></svg>
<svg style="left:241px;top:473px" width="7" height="7" viewBox="0 0 7 7"><path d="M0 0h6L0 6z" fill="#0b7d1f"/></svg>
<div class="t" style="left:25px;top:497.70px;font-size:12.6px;line-height:12.6px;color:#000;">190</div>
<div class="t" style="left:86px;top:497.70px;font-size:12.6px;line-height:12.6px;color:#000;width:72px;text-align:right;">1</div>
<div class="t" style="left:163px;top:497.70px;font-size:12.6px;line-height:12.6px;color:#000;">486</div>
<div class="t" style="left:243px;top:497.70px;font-size:12.6px;line-height:12.6px;color:#000;">491</div>
<div class="t" style="left:312px;top:497.70px;font-size:12.6px;line-height:12.6px;color:#000;width:79px;text-align:right;letter-spacing:-0.005px;">0.7635</div>
<div class="t" style="left:393px;top:497.70px;font-size:12.6px;line-height:12.6px;color:#000;width:88px;text-align:right;letter-spacing:-0.005px;">0.7635</div>
<svg style="left:23px;top:493px" width="7" height="7" viewBox="0 0 7 7"><path d="M0 0h6L0 6z" fill="#0b7d1f"/></svg>
<svg style="left:161px;top:493px" width="7" height="7" viewBox="0 0 7 7"><path d="M0 0h6L0 6z" fill="#0b7d1f"/></svg>
<svg style="left:241px;top:493px" width="7" height="7" viewBox="0 0 7 7"><path d="M0 0h6L0 6z" fill="#0b7d1f"/></svg>
<div class="t" style="left:25px;top:517.70px;font-size:12.6px;line-height:12.6px;color:#000;">191</div>
<div class="t" style="left:86px;top:517.70px;font-size:12.6px;line-height:12.6px;color:#000;width:72px;text-align:right;">1</div>
<div class="t" style="left:163px;top:517.70px;font-size:12.6px;line-height:12.6px;color:#000;">494</div>
<div class="t" style="left:243px;top:517.70px;font-size:12.6px;line-height:12.6px;color:#000;">495</div>
<div class="t" style="left:312px;top:517.70px;font-size:12.6px;line-height:12.6px;color:#000;width:79px;text-align:right;letter-spacing:-0.103px;">0.764</div>
<div class="t" style="left:393px;top:517.70px;font-size:12.6px;line-height:12.6px;color:#000;width:88px;text-align:right;letter-spacing:-0.103px;">0.764</div>
<svg style="left:23px;top:513px" width="7" height="7" viewBox="0 0 7 7"><path d="M0 0h6L0 6z" fill="#0b7d1f"/></svg>
<svg style="left:161px;top:513px" width="7" height="7" viewBox="0 0 7 7"><path d="M0 0h6L0 6z" fill="#0b7d1f"/></svg>
<svg style="left:241px;top:513px" width="7" height="7" viewBox="0 0 7 7"><path d="M0 0h6L0 6z" fill="#0b7d1f"/></svg>
<div class="t" style="left:25px;top:537.70px;font-size:12.6px;line-height:12.6px;color:#000;">192</div>
<div class="t" style="left:86px;top:537.70px;font-size:12.6px;line-height:12.6px;color:#000;width:72px;text-align:right;">1</div>
<div class="t" style="left:163px;top:537.70px;font-size:12.6px;line-height:12.6px;color:#000;">496</div>
<div class="t" style="left:243px;top:537.70px;font-size:12.6px;line-height:12.6px;color:#000;">499</div>
<div class="t" style="left:312px;top:537.70px;font-size:12.6px;line-height:12.6px;color:#000;width:79px;text-align:right;letter-spacing:-0.005px;">0.7635</div>
<div class="t" style="left:393px;top:537.70px;font-size:12.6px;line-height:12.6px;color:#000;width:88px;text-align:right;letter-spacing:-0.005px;">0.7635</div>
<svg style="left:23px;top:533px" width="7" height="7" viewBox="0 0 7 7"><path d="M0 0h6L0 6z" fill="#0b7d1f"/></svg>
<svg style="left:161px;top:533px" width="7" height="7" viewBox="0 0 7 7"><path d="M0 0h6L0 6z" fill="#0b7d1f"/></svg>
<svg style="left:241px;top:533px" width="7" height="7" viewBox="0 0 7 7"><path d="M0 0h6L0 6z" fill="#0b7d1f"/></svg>
<div class="r" style="left:21px;top:134px;width:2px;height:418px;background:#217346;"></div>
<div class="r" style="left:1px;top:551px;width:485px;height:28px;background:#e6e6e6;"></div>
<div class="r" style="left:1px;top:551px;width:485px;height:1px;background:#ababab;"></div>
<svg style="left:22px;top:559px" width="40" height="12" viewBox="0 0 40 12"><path d="M6 1.5v9L1.5 6z" fill="#217346"/><path d="M31 1.5v9L35.5 6z" fill="#217346"/></svg>
<div class="r" style="left:78px;top:567px;width:2px;height:2px;background:#217346;"></div>
<div class="r" style="left:82px;top:567px;width:2px;height:2px;background:#217346;"></div>
<div class="r" style="left:86px;top:567px;width:2px;height:2px;background:#217346;"></div>
<div class="r" style="left:96px;top:555px;width:1px;height:20px;background:#a6a6a6;"></div>
<div class="t" style="left:111px;top:558.55px;font-size:12.9px;line-height:12.9px;color:#444;letter-spacing:0.007px;">Null Line Object Connectivity</div>
<div class="r" style="left:291px;top:555px;width:1px;height:20px;background:#a6a6a6;"></div>
<div class="t" style="left:310px;top:558.55px;font-size:12.9px;line-height:12.9px;color:#444;letter-spacing:-0.001px;">Point Object Connectivity</div>
<div class="r" style="left:473px;top:551px;width:13px;height:23px;background:#fff;border-left:1px solid #ababab;"></div>
<div class="r" style="left:473px;top:574px;width:13px;height:2px;background:#217346;"></div>
<div class="r" style="left:1px;top:579px;width:485px;height:22px;background:#f3f3f3;"></div>
<div class="r" style="left:1px;top:579px;width:485px;height:1px;background:#d6d6d6;"></div>
<div class="t" style="left:5px;top:586.25px;font-size:10.5px;line-height:10.5px;color:#444;letter-spacing:0.028px;">Ready</div>
<div class="t" style="left:393px;top:585.00px;font-size:11px;line-height:11px;color:#444;letter-spacing:0.122px;">Count: 71</div>
<div class="r" style="left:467px;top:580px;width:19px;height:21px;background:#c8c8c8;"></div>
<svg style="left:480px;top:583px" width="6" height="13" viewBox="0 0 6 13" shape-rendering="crispEdges"><rect x="0.5" y="0.5" width="12" height="12" fill="#fff" stroke="#333"/><path d="M4.5 0V13M0 4.5H6M0 8.5H6" stroke="#333"/></svg>
<div class="r" style="left:486px;top:0px;width:514px;height:651px;background:#555;"></div>
<div class="r" style="left:487px;top:1px;width:512px;height:649px;background:#f0f0f0;"></div>
<div class="r" style="left:487px;top:1px;width:512px;height:27px;background:#fff;"></div>
<div class="r" style="left:493px;top:4px;width:16px;height:16px;background:#0078d7;"></div>
<div class="t" style="left:493px;top:3.30px;font-size:19px;line-height:19px;color:#fff;font-weight:bold;width:16px;text-align:center;text-shadow:0 1.2px 0 #04142a;-webkit-text-stroke:0.5px #fff;transform:scaleX(0.8);">S</div>
<div class="t" style="left:514px;top:7.65px;font-size:11.5px;line-height:11.5px;color:#000;letter-spacing:0.004px;">Choose Tables for Display</div>
<svg style="left:981px;top:6px" width="13" height="13" viewBox="0 0 13 13"><path d="M2.4 1.4L11.6 10.6M11.6 1.4L2.4 10.6" stroke="#000" stroke-width="1.1"/></svg>
<div class="r" style="left:487px;top:28px;width:333px;height:23px;background:linear-gradient(to right,#efefef,#f4f4f4);"></div>
<div class="r" style="left:820px;top:28px;width:179px;height:23px;background:#f8f8f8;"></div>
<div class="t" style="left:500px;top:34.65px;font-size:11.5px;line-height:11.5px;color:#000;letter-spacing:-0.082px;">Edit</div>
<div class="r" style="left:493px;top:61px;width:328px;height:555px;background:#fff;border:1px solid #828790;"></div>
<svg style="left:493px;top:61px" width="328" height="555" viewBox="0 0 328 555" shape-rendering="crispEdges"><path d="M11 10h1v1h-1zM11 12h1v1h-1zM11 14h1v1h-1zM11 16h1v1h-1zM11 18h1v1h-1zM11 20h1v1h-1zM11 22h1v1h-1zM11 24h1v1h-1zM11 26h1v1h-1zM11 28h1v1h-1zM11 30h1v1h-1zM11 32h1v1h-1zM11 34h1v1h-1zM11 36h1v1h-1zM11 38h1v1h-1zM11 40h1v1h-1zM11 42h1v1h-1zM11 44h1v1h-1zM11 46h1v1h-1zM11 48h1v1h-1zM11 50h1v1h-1zM11 52h1v1h-1zM11 54h1v1h-1zM11 56h1v1h-1zM11 58h1v1h-1zM11 60h1v1h-1zM11 62h1v1h-1zM11 64h1v1h-1zM11 66h1v1h-1zM11 68h1v1h-1zM11 70h1v1h-1zM11 72h1v1h-1zM11 74h1v1h-1zM11 76h1v1h-1zM11 78h1v1h-1zM11 80h1v1h-1zM11 82h1v1h-1zM11 84h1v1h-1zM11 86h1v1h-1zM11 88h1v1h-1zM11 90h1v1h-1zM11 92h1v1h-1zM11 94h1v1h-1zM11 96h1v1h-1zM11 98h1v1h-1zM11 100h1v1h-1zM11 102h1v1h-1zM11 104h1v1h-1zM11 106h1v1h-1zM11 108h1v1h-1zM11 110h1v1h-1zM11 112h1v1h-1zM11 114h1v1h-1zM11 116h1v1h-1zM11 118h1v1h-1zM11 120h1v1h-1zM11 122h1v1h-1zM11 124h1v1h-1zM11 126h1v1h-1zM11 128h1v1h-1zM11 130h1v1h-1zM11 132h1v1h-1zM11 134h1v1h-1zM11 136h1v1h-1zM11 138h1v1h-1zM11 140h1v1h-1zM11 142h1v1h-1zM11 144h1v1h-1zM11 146h1v1h-1zM11 148h1v1h-1zM11 150h1v1h-1zM11 152h1v1h-1zM11 154h1v1h-1zM11 156h1v1h-1zM11 158h1v1h-1zM11 160h1v1h-1zM11 162h1v1h-1zM11 164h1v1h-1zM11 166h1v1h-1zM11 168h1v1h-1zM11 170h1v1h-1zM11 172h1v1h-1zM11 174h1v1h-1zM11 176h1v1h-1zM11 178h1v1h-1zM11 180h1v1h-1zM11 182h1v1h-1zM11 184h1v1h-1zM11 186h1v1h-1zM11 188h1v1h-1zM11 190h1v1h-1zM11 192h1v1h-1zM11 194h1v1h-1zM11 196h1v1h-1zM11 198h1v1h-1zM11 200h1v1h-1zM11 202h1v1h-1zM11 204h1v1h-1zM11 206h1v1h-1zM11 208h1v1h-1zM11 210h1v1h-1zM11 212h1v1h-1zM11 214h1v1h-1zM11 216h1v1h-1zM11 218h1v1h-1zM11 220h1v1h-1zM11 222h1v1h-1zM11 224h1v1h-1zM11 226h1v1h-1zM11 228h1v1h-1zM11 230h1v1h-1zM11 232h1v1h-1zM11 234h1v1h-1zM11 236h1v1h-1zM11 238h1v1h-1zM11 240h1v1h-1zM11 242h1v1h-1zM11 244h1v1h-1zM11 246h1v1h-1zM11 248h1v1h-1zM11 250h1v1h-1zM11 252h1v1h-1zM11 254h1v1h-1zM11 256h1v1h-1zM11 258h1v1h-1zM11 260h1v1h-1zM11 262h1v1h-1zM11 264h1v1h-1zM11 266h1v1h-1zM11 268h1v1h-1zM11 270h1v1h-1zM11 272h1v1h-1zM11 274h1v1h-1zM11 276h1v1h-1zM11 278h1v1h-1zM11 280h1v1h-1zM11 282h1v1h-1zM11 284h1v1h-1zM11 286h1v1h-1zM11 288h1v1h-1zM11 290h1v1h-1zM11 292h1v1h-1zM11 294h1v1h-1zM11 296h1v1h-1zM11 298h1v1h-1zM11 300h1v1h-1zM11 302h1v1h-1zM11 304h1v1h-1zM11 306h1v1h-1zM11 308h1v1h-1zM11 310h1v1h-1zM11 312h1v1h-1zM11 314h1v1h-1zM11 316h1v1h-1zM11 318h1v1h-1zM11 320h1v1h-1zM11 322h1v1h-1zM11 324h1v1h-1zM11 326h1v1h-1zM11 328h1v1h-1zM11 330h1v1h-1zM11 332h1v1h-1zM11 334h1v1h-1zM11 336h1v1h-1zM11 338h1v1h-1zM11 340h1v1h-1zM11 342h1v1h-1zM11 344h1v1h-1zM11 346h1v1h-1zM11 348h1v1h-1zM11 350h1v1h-1zM11 352h1v1h-1zM11 354h1v1h-1zM11 356h1v1h-1zM11 358h1v1h-1zM11 360h1v1h-1zM11 362h1v1h-1zM11 364h1v1h-1zM11 366h1v1h-1zM11 368h1v1h-1zM11 370h1v1h-1zM11 372h1v1h-1zM11 374h1v1h-1zM11 376h1v1h-1zM11 378h1v1h-1zM11 380h1v1h-1zM11 382h1v1h-1zM11 384h1v1h-1zM11 386h1v1h-1zM11 388h1v1h-1zM11 390h1v1h-1zM11 392h1v1h-1zM11 394h1v1h-1zM11 396h1v1h-1zM11 398h1v1h-1zM11 400h1v1h-1zM11 402h1v1h-1zM11 404h1v1h-1zM11 406h1v1h-1zM11 408h1v1h-1zM11 410h1v1h-1zM11 412h1v1h-1zM11 414h1v1h-1zM11 416h1v1h-1zM11 418h1v1h-1zM11 420h1v1h-1zM11 422h1v1h-1zM11 424h1v1h-1zM11 426h1v1h-1zM11 428h1v1h-1zM11 430h1v1h-1zM11 432h1v1h-1zM11 434h1v1h-1zM11 436h1v1h-1zM11 438h1v1h-1zM11 440h1v1h-1zM11 442h1v1h-1zM13 10h1v1h-1zM13 250h1v1h-1zM13 442h1v1h-1zM15 10h1v1h-1zM15 250h1v1h-1zM15 442h1v1h-1zM17 10h1v1h-1zM17 250h1v1h-1zM17 442h1v1h-1zM19 10h1v1h-1zM19 250h1v1h-1zM19 442h1v1h-1zM27 18h1v1h-1zM27 20h1v1h-1zM27 22h1v1h-1zM27 24h1v1h-1zM27 26h1v1h-1zM27 28h1v1h-1zM27 30h1v1h-1zM27 32h1v1h-1zM27 34h1v1h-1zM27 36h1v1h-1zM27 38h1v1h-1zM27 40h1v1h-1zM27 42h1v1h-1zM27 44h1v1h-1zM27 46h1v1h-1zM27 48h1v1h-1zM27 50h1v1h-1zM27 52h1v1h-1zM27 54h1v1h-1zM27 56h1v1h-1zM27 58h1v1h-1zM27 60h1v1h-1zM27 62h1v1h-1zM27 64h1v1h-1zM27 66h1v1h-1zM27 68h1v1h-1zM27 70h1v1h-1zM27 72h1v1h-1zM27 74h1v1h-1zM27 76h1v1h-1zM27 78h1v1h-1zM27 80h1v1h-1zM27 82h1v1h-1zM27 84h1v1h-1zM27 86h1v1h-1zM27 88h1v1h-1zM27 90h1v1h-1zM27 92h1v1h-1zM27 94h1v1h-1zM27 96h1v1h-1zM27 98h1v1h-1zM27 100h1v1h-1zM27 102h1v1h-1zM27 104h1v1h-1zM27 106h1v1h-1zM27 108h1v1h-1zM27 110h1v1h-1zM27 112h1v1h-1zM27 114h1v1h-1zM27 116h1v1h-1zM27 118h1v1h-1zM27 120h1v1h-1zM27 122h1v1h-1zM27 124h1v1h-1zM27 126h1v1h-1zM27 128h1v1h-1zM27 130h1v1h-1zM27 132h1v1h-1zM27 134h1v1h-1zM27 136h1v1h-1zM27 138h1v1h-1zM27 140h1v1h-1zM27 142h1v1h-1zM27 144h1v1h-1zM27 146h1v1h-1zM27 148h1v1h-1zM27 150h1v1h-1zM27 152h1v1h-1zM27 154h1v1h-1zM27 156h1v1h-1zM27 158h1v1h-1zM27 160h1v1h-1zM27 162h1v1h-1zM27 164h1v1h-1zM27 166h1v1h-1zM27 168h1v1h-1zM27 170h1v1h-1zM27 172h1v1h-1zM27 174h1v1h-1zM27 176h1v1h-1zM27 178h1v1h-1zM27 180h1v1h-1zM27 182h1v1h-1zM27 184h1v1h-1zM27 186h1v1h-1zM27 188h1v1h-1zM27 190h1v1h-1zM27 192h1v1h-1zM27 194h1v1h-1zM27 196h1v1h-1zM27 198h1v1h-1zM27 200h1v1h-1zM27 202h1v1h-1zM27 204h1v1h-1zM27 206h1v1h-1zM27 208h1v1h-1zM27 210h1v1h-1zM27 212h1v1h-1zM27 214h1v1h-1zM27 216h1v1h-1zM27 218h1v1h-1zM27 220h1v1h-1zM27 222h1v1h-1zM27 224h1v1h-1zM27 226h1v1h-1zM27 228h1v1h-1zM27 230h1v1h-1zM27 232h1v1h-1zM27 234h1v1h-1zM27 258h1v1h-1zM27 260h1v1h-1zM27 262h1v1h-1zM27 264h1v1h-1zM27 266h1v1h-1zM27 268h1v1h-1zM27 270h1v1h-1zM27 272h1v1h-1zM27 274h1v1h-1zM27 276h1v1h-1zM27 278h1v1h-1zM27 280h1v1h-1zM27 282h1v1h-1zM27 284h1v1h-1zM27 286h1v1h-1zM27 288h1v1h-1zM27 290h1v1h-1zM27 292h1v1h-1zM27 294h1v1h-1zM27 296h1v1h-1zM27 298h1v1h-1zM27 300h1v1h-1zM27 302h1v1h-1zM27 304h1v1h-1zM27 306h1v1h-1zM27 308h1v1h-1zM27 310h1v1h-1zM27 312h1v1h-1zM27 314h1v1h-1zM27 316h1v1h-1zM27 318h1v1h-1zM27 320h1v1h-1zM27 322h1v1h-1zM27 324h1v1h-1zM27 326h1v1h-1zM27 328h1v1h-1zM27 330h1v1h-1zM27 332h1v1h-1zM27 334h1v1h-1zM27 336h1v1h-1zM27 338h1v1h-1zM27 340h1v1h-1zM27 342h1v1h-1zM27 344h1v1h-1zM27 346h1v1h-1zM27 348h1v1h-1zM27 350h1v1h-1zM27 352h1v1h-1zM27 354h1v1h-1zM27 356h1v1h-1zM27 358h1v1h-1zM27 360h1v1h-1zM27 362h1v1h-1zM27 364h1v1h-1zM27 366h1v1h-1zM27 368h1v1h-1zM27 370h1v1h-1zM27 372h1v1h-1zM27 374h1v1h-1zM27 376h1v1h-1zM27 378h1v1h-1zM27 380h1v1h-1zM27 382h1v1h-1zM27 384h1v1h-1zM27 386h1v1h-1zM27 388h1v1h-1zM27 390h1v1h-1zM27 392h1v1h-1zM27 394h1v1h-1zM27 396h1v1h-1zM27 398h1v1h-1zM27 400h1v1h-1zM27 402h1v1h-1zM27 404h1v1h-1zM27 406h1v1h-1zM27 408h1v1h-1zM27 410h1v1h-1zM27 412h1v1h-1zM27 414h1v1h-1zM27 416h1v1h-1zM27 418h1v1h-1zM27 420h1v1h-1zM27 422h1v1h-1zM27 424h1v1h-1zM27 426h1v1h-1zM27 450h1v1h-1zM27 452h1v1h-1zM27 454h1v1h-1zM27 456h1v1h-1zM27 458h1v1h-1zM29 26h1v1h-1zM29 42h1v1h-1zM29 58h1v1h-1zM29 106h1v1h-1zM29 122h1v1h-1zM29 138h1v1h-1zM29 170h1v1h-1zM29 186h1v1h-1zM29 202h1v1h-1zM29 218h1v1h-1zM29 234h1v1h-1zM29 266h1v1h-1zM29 282h1v1h-1zM29 298h1v1h-1zM29 314h1v1h-1zM29 362h1v1h-1zM29 426h1v1h-1zM29 458h1v1h-1zM31 26h1v1h-1zM31 42h1v1h-1zM31 58h1v1h-1zM31 106h1v1h-1zM31 122h1v1h-1zM31 138h1v1h-1zM31 170h1v1h-1zM31 186h1v1h-1zM31 202h1v1h-1zM31 218h1v1h-1zM31 234h1v1h-1zM31 266h1v1h-1zM31 282h1v1h-1zM31 298h1v1h-1zM31 314h1v1h-1zM31 362h1v1h-1zM31 426h1v1h-1zM31 458h1v1h-1zM33 26h1v1h-1zM33 42h1v1h-1zM33 58h1v1h-1zM33 106h1v1h-1zM33 122h1v1h-1zM33 138h1v1h-1zM33 170h1v1h-1zM33 186h1v1h-1zM33 202h1v1h-1zM33 218h1v1h-1zM33 234h1v1h-1zM33 266h1v1h-1zM33 282h1v1h-1zM33 298h1v1h-1zM33 314h1v1h-1zM33 362h1v1h-1zM33 426h1v1h-1zM33 458h1v1h-1zM35 26h1v1h-1zM35 42h1v1h-1zM35 58h1v1h-1zM35 106h1v1h-1zM35 122h1v1h-1zM35 138h1v1h-1zM35 170h1v1h-1zM35 186h1v1h-1zM35 202h1v1h-1zM35 218h1v1h-1zM35 234h1v1h-1zM35 266h1v1h-1zM35 282h1v1h-1zM35 298h1v1h-1zM35 314h1v1h-1zM35 362h1v1h-1zM35 426h1v1h-1zM35 458h1v1h-1zM43 66h1v1h-1zM43 68h1v1h-1zM43 70h1v1h-1zM43 72h1v1h-1zM43 74h1v1h-1zM43 146h1v1h-1zM43 148h1v1h-1zM43 150h1v1h-1zM43 152h1v1h-1zM43 154h1v1h-1zM43 322h1v1h-1zM43 324h1v1h-1zM43 326h1v1h-1zM43 328h1v1h-1zM43 330h1v1h-1zM43 370h1v1h-1zM43 372h1v1h-1zM43 374h1v1h-1zM43 376h1v1h-1zM43 378h1v1h-1zM43 466h1v1h-1zM43 468h1v1h-1zM43 470h1v1h-1zM43 472h1v1h-1zM43 474h1v1h-1zM43 476h1v1h-1zM43 478h1v1h-1zM43 480h1v1h-1zM43 482h1v1h-1zM43 484h1v1h-1zM43 486h1v1h-1zM43 488h1v1h-1zM43 490h1v1h-1zM43 492h1v1h-1zM43 494h1v1h-1zM43 496h1v1h-1zM43 498h1v1h-1zM43 500h1v1h-1zM43 502h1v1h-1zM43 504h1v1h-1zM43 506h1v1h-1zM43 508h1v1h-1zM43 510h1v1h-1zM43 512h1v1h-1zM43 514h1v1h-1zM43 516h1v1h-1zM43 518h1v1h-1zM43 520h1v1h-1zM43 522h1v1h-1zM43 524h1v1h-1zM43 526h1v1h-1zM43 528h1v1h-1zM43 530h1v1h-1zM43 532h1v1h-1zM43 534h1v1h-1zM43 536h1v1h-1zM43 538h1v1h-1zM45 74h1v1h-1zM45 154h1v1h-1zM45 330h1v1h-1zM45 378h1v1h-1zM45 474h1v1h-1zM45 490h1v1h-1zM45 522h1v1h-1zM45 538h1v1h-1zM47 74h1v1h-1zM47 154h1v1h-1zM47 330h1v1h-1zM47 378h1v1h-1zM47 474h1v1h-1zM47 490h1v1h-1zM47 522h1v1h-1zM47 538h1v1h-1zM49 74h1v1h-1zM49 154h1v1h-1zM49 330h1v1h-1zM49 378h1v1h-1zM49 474h1v1h-1zM49 490h1v1h-1zM49 522h1v1h-1zM49 538h1v1h-1zM51 74h1v1h-1zM51 154h1v1h-1zM51 330h1v1h-1zM51 378h1v1h-1zM51 474h1v1h-1zM51 490h1v1h-1zM51 522h1v1h-1zM51 538h1v1h-1zM59 82h1v1h-1zM59 84h1v1h-1zM59 86h1v1h-1zM59 88h1v1h-1zM59 90h1v1h-1zM59 338h1v1h-1zM59 340h1v1h-1zM59 342h1v1h-1zM59 344h1v1h-1zM59 346h1v1h-1zM59 386h1v1h-1zM59 388h1v1h-1zM59 390h1v1h-1zM59 392h1v1h-1zM59 394h1v1h-1zM59 396h1v1h-1zM59 398h1v1h-1zM59 400h1v1h-1zM59 402h1v1h-1zM59 404h1v1h-1zM59 406h1v1h-1zM59 408h1v1h-1zM59 410h1v1h-1zM59 498h1v1h-1zM59 500h1v1h-1zM59 502h1v1h-1zM59 504h1v1h-1zM59 506h1v1h-1zM61 90h1v1h-1zM61 346h1v1h-1zM61 394h1v1h-1zM61 410h1v1h-1zM61 506h1v1h-1zM63 90h1v1h-1zM63 346h1v1h-1zM63 394h1v1h-1zM63 410h1v1h-1zM63 506h1v1h-1zM65 90h1v1h-1zM65 346h1v1h-1zM65 394h1v1h-1zM65 410h1v1h-1zM65 506h1v1h-1zM67 90h1v1h-1zM67 346h1v1h-1zM67 394h1v1h-1zM67 410h1v1h-1zM67 506h1v1h-1z" fill="#a0a0a0"/></svg>
<div class="r" style="left:500px;top:67px;width:9px;height:9px;border:1px solid #a3a3a3;border-radius:1px;background:linear-gradient(#ffffff,#e3e3e3);"></div>
<div class="r" style="left:502px;top:71px;width:5px;height:1px;background:#3d5a9e;"></div>
<div class="r" style="left:515px;top:66px;width:10px;height:10px;background:#fff;border:1px solid #000;"></div>
<div class="r" style="left:529px;top:63px;width:219px;height:16px;background:#0078d7;"></div>
<div class="t" style="left:531px;top:65.62px;font-size:10.75px;line-height:10.75px;color:#fff;letter-spacing:-0.752px;">MODEL DEFINITION</div>
<div class="t" style="left:628px;top:65.62px;font-size:10.75px;line-height:10.75px;color:#fff;letter-spacing:0.103px;">(0 of 64 tables selected)</div>
<div class="r" style="left:516px;top:83px;width:9px;height:9px;border:1px solid #a3a3a3;border-radius:1px;background:linear-gradient(#ffffff,#e3e3e3);"></div>
<div class="r" style="left:518px;top:87px;width:5px;height:1px;background:#3d5a9e;"></div>
<div class="r" style="left:520px;top:85px;width:1px;height:5px;background:#3d5a9e;"></div>
<div class="r" style="left:531px;top:82px;width:10px;height:10px;background:#fff;border:1px solid #000;"></div>
<div class="t" style="left:547px;top:81.62px;font-size:10.75px;line-height:10.75px;color:#000;letter-spacing:-0.113px;">System Data</div>
<div class="r" style="left:516px;top:99px;width:9px;height:9px;border:1px solid #a3a3a3;border-radius:1px;background:linear-gradient(#ffffff,#e3e3e3);"></div>
<div class="r" style="left:518px;top:103px;width:5px;height:1px;background:#3d5a9e;"></div>
<div class="r" style="left:520px;top:101px;width:1px;height:5px;background:#3d5a9e;"></div>
<div class="r" style="left:531px;top:98px;width:10px;height:10px;background:#fff;border:1px solid #000;"></div>
<div class="t" style="left:547px;top:97.62px;font-size:10.75px;line-height:10.75px;color:#000;letter-spacing:-0.016px;">Property Definitions</div>
<div class="r" style="left:516px;top:115px;width:9px;height:9px;border:1px solid #a3a3a3;border-radius:1px;background:linear-gradient(#ffffff,#e3e3e3);"></div>
<div class="r" style="left:518px;top:119px;width:5px;height:1px;background:#3d5a9e;"></div>
<div class="r" style="left:531px;top:114px;width:10px;height:10px;background:#fff;border:1px solid #000;"></div>
<div class="t" style="left:547px;top:113.62px;font-size:10.75px;line-height:10.75px;color:#000;letter-spacing:-0.065px;">Load Pattern Definitions</div>
<div class="r" style="left:532px;top:131px;width:9px;height:9px;border:1px solid #a3a3a3;border-radius:1px;background:linear-gradient(#ffffff,#e3e3e3);"></div>
<div class="r" style="left:534px;top:135px;width:5px;height:1px;background:#3d5a9e;"></div>
<div class="r" style="left:547px;top:130px;width:10px;height:10px;background:#fff;border:1px solid #000;"></div>
<div class="t" style="left:563px;top:129.62px;font-size:10.75px;line-height:10.75px;color:#1515ff;letter-spacing:-0.134px;">Load Patterns</div>
<div class="r" style="left:563px;top:146px;width:10px;height:10px;background:#fff;border:1px solid #000;"></div>
<div class="t" style="left:579px;top:145.62px;font-size:10.75px;line-height:10.75px;color:#000;letter-spacing:-0.097px;">Table:  Load Pattern Definitions</div>
<div class="r" style="left:516px;top:163px;width:9px;height:9px;border:1px solid #a3a3a3;border-radius:1px;background:linear-gradient(#ffffff,#e3e3e3);"></div>
<div class="r" style="left:518px;top:167px;width:5px;height:1px;background:#3d5a9e;"></div>
<div class="r" style="left:520px;top:165px;width:1px;height:5px;background:#3d5a9e;"></div>
<div class="r" style="left:531px;top:162px;width:10px;height:10px;background:#fff;border:1px solid #000;"></div>
<div class="t" style="left:547px;top:161.62px;font-size:10.75px;line-height:10.75px;color:#000;letter-spacing:-0.052px;">Other Definitions</div>
<div class="r" style="left:516px;top:179px;width:9px;height:9px;border:1px solid #a3a3a3;border-radius:1px;background:linear-gradient(#ffffff,#e3e3e3);"></div>
<div class="r" style="left:518px;top:183px;width:5px;height:1px;background:#3d5a9e;"></div>
<div class="r" style="left:520px;top:181px;width:1px;height:5px;background:#3d5a9e;"></div>
<div class="r" style="left:531px;top:178px;width:10px;height:10px;background:#fff;border:1px solid #000;"></div>
<div class="t" style="left:547px;top:177.62px;font-size:10.75px;line-height:10.75px;color:#000;letter-spacing:-0.052px;">Load Case Definitions</div>
<div class="r" style="left:516px;top:195px;width:9px;height:9px;border:1px solid #a3a3a3;border-radius:1px;background:linear-gradient(#ffffff,#e3e3e3);"></div>
<div class="r" style="left:518px;top:199px;width:5px;height:1px;background:#3d5a9e;"></div>
<div class="r" style="left:531px;top:194px;width:10px;height:10px;background:#fff;border:1px solid #000;"></div>
<div class="t" style="left:547px;top:193.62px;font-size:10.75px;line-height:10.75px;color:#000;letter-spacing:-0.062px;">Connectivity Data</div>
<div class="r" style="left:532px;top:211px;width:9px;height:9px;border:1px solid #a3a3a3;border-radius:1px;background:linear-gradient(#ffffff,#e3e3e3);"></div>
<div class="r" style="left:534px;top:215px;width:5px;height:1px;background:#3d5a9e;"></div>
<div class="r" style="left:536px;top:213px;width:1px;height:5px;background:#3d5a9e;"></div>
<div class="r" style="left:547px;top:210px;width:10px;height:10px;background:#fff;border:1px solid #000;"></div>
<div class="t" style="left:563px;top:209.62px;font-size:10.75px;line-height:10.75px;color:#1515ff;letter-spacing:-0.174px;">Object Connectivity</div>
<div class="r" style="left:516px;top:227px;width:9px;height:9px;border:1px solid #a3a3a3;border-radius:1px;background:linear-gradient(#ffffff,#e3e3e3);"></div>
<div class="r" style="left:518px;top:231px;width:5px;height:1px;background:#3d5a9e;"></div>
<div class="r" style="left:520px;top:229px;width:1px;height:5px;background:#3d5a9e;"></div>
<div class="r" style="left:531px;top:226px;width:10px;height:10px;background:#fff;border:1px solid #000;"></div>
<div class="t" style="left:547px;top:225.62px;font-size:10.75px;line-height:10.75px;color:#000;letter-spacing:0.039px;">Joint Assignments</div>
<div class="r" style="left:516px;top:243px;width:9px;height:9px;border:1px solid #a3a3a3;border-radius:1px;background:linear-gradient(#ffffff,#e3e3e3);"></div>
<div class="r" style="left:518px;top:247px;width:5px;height:1px;background:#3d5a9e;"></div>
<div class="r" style="left:520px;top:245px;width:1px;height:5px;background:#3d5a9e;"></div>
<div class="r" style="left:531px;top:242px;width:10px;height:10px;background:#fff;border:1px solid #000;"></div>
<div class="t" style="left:547px;top:241.62px;font-size:10.75px;line-height:10.75px;color:#000;letter-spacing:0.012px;">Frame Assignments</div>
<div class="r" style="left:516px;top:259px;width:9px;height:9px;border:1px solid #a3a3a3;border-radius:1px;background:linear-gradient(#ffffff,#e3e3e3);"></div>
<div class="r" style="left:518px;top:263px;width:5px;height:1px;background:#3d5a9e;"></div>
<div class="r" style="left:520px;top:261px;width:1px;height:5px;background:#3d5a9e;"></div>
<div class="r" style="left:531px;top:258px;width:10px;height:10px;background:#fff;border:1px solid #000;"></div>
<div class="t" style="left:547px;top:257.62px;font-size:10.75px;line-height:10.75px;color:#000;letter-spacing:0.166px;">Area Assignments</div>
<div class="r" style="left:516px;top:275px;width:9px;height:9px;border:1px solid #a3a3a3;border-radius:1px;background:linear-gradient(#ffffff,#e3e3e3);"></div>
<div class="r" style="left:518px;top:279px;width:5px;height:1px;background:#3d5a9e;"></div>
<div class="r" style="left:520px;top:277px;width:1px;height:5px;background:#3d5a9e;"></div>
<div class="r" style="left:531px;top:274px;width:10px;height:10px;background:#fff;border:1px solid #000;"></div>
<div class="t" style="left:547px;top:273.62px;font-size:10.75px;line-height:10.75px;color:#000;letter-spacing:0.017px;">Options and Preferences Data</div>
<div class="r" style="left:516px;top:291px;width:9px;height:9px;border:1px solid #a3a3a3;border-radius:1px;background:linear-gradient(#ffffff,#e3e3e3);"></div>
<div class="r" style="left:518px;top:295px;width:5px;height:1px;background:#3d5a9e;"></div>
<div class="r" style="left:520px;top:293px;width:1px;height:5px;background:#3d5a9e;"></div>
<div class="r" style="left:531px;top:290px;width:10px;height:10px;background:#fff;border:1px solid #000;"></div>
<div class="t" style="left:547px;top:289.62px;font-size:10.75px;line-height:10.75px;color:#000;letter-spacing:-0.084px;">Miscellaneous Data</div>
<div class="r" style="left:500px;top:307px;width:9px;height:9px;border:1px solid #a3a3a3;border-radius:1px;background:linear-gradient(#ffffff,#e3e3e3);"></div>
<div class="r" style="left:502px;top:311px;width:5px;height:1px;background:#3d5a9e;"></div>
<div class="r" style="left:515px;top:306px;width:10px;height:10px;background:#fff;border:1px solid #000;"></div>
<div class="t" style="left:531px;top:305.62px;font-size:10.75px;line-height:10.75px;color:#000;letter-spacing:-0.173px;">ANALYSIS RESULTS</div>
<div class="t" style="left:639px;top:305.62px;font-size:10.75px;line-height:10.75px;color:#000;letter-spacing:0.099px;">(0 of 19 tables selected)</div>
<div class="r" style="left:516px;top:323px;width:9px;height:9px;border:1px solid #a3a3a3;border-radius:1px;background:linear-gradient(#ffffff,#e3e3e3);"></div>
<div class="r" style="left:518px;top:327px;width:5px;height:1px;background:#3d5a9e;"></div>
<div class="r" style="left:520px;top:325px;width:1px;height:5px;background:#3d5a9e;"></div>
<div class="r" style="left:531px;top:322px;width:10px;height:10px;background:#fff;border:1px solid #000;"></div>
<div class="t" style="left:547px;top:321.62px;font-size:10.75px;line-height:10.75px;color:#000;letter-spacing:-0.179px;">Run Information</div>
<div class="r" style="left:516px;top:339px;width:9px;height:9px;border:1px solid #a3a3a3;border-radius:1px;background:linear-gradient(#ffffff,#e3e3e3);"></div>
<div class="r" style="left:518px;top:343px;width:5px;height:1px;background:#3d5a9e;"></div>
<div class="r" style="left:520px;top:341px;width:1px;height:5px;background:#3d5a9e;"></div>
<div class="r" style="left:531px;top:338px;width:10px;height:10px;background:#fff;border:1px solid #000;"></div>
<div class="t" style="left:547px;top:337.62px;font-size:10.75px;line-height:10.75px;color:#000;letter-spacing:-0.114px;">Joint Output</div>
<div class="r" style="left:516px;top:355px;width:9px;height:9px;border:1px solid #a3a3a3;border-radius:1px;background:linear-gradient(#ffffff,#e3e3e3);"></div>
<div class="r" style="left:518px;top:359px;width:5px;height:1px;background:#3d5a9e;"></div>
<div class="r" style="left:520px;top:357px;width:1px;height:5px;background:#3d5a9e;"></div>
<div class="r" style="left:531px;top:354px;width:10px;height:10px;background:#fff;border:1px solid #000;"></div>
<div class="t" style="left:547px;top:353.62px;font-size:10.75px;line-height:10.75px;color:#000;letter-spacing:-0.2px;">Element Output</div>
<div class="r" style="left:516px;top:371px;width:9px;height:9px;border:1px solid #a3a3a3;border-radius:1px;background:linear-gradient(#ffffff,#e3e3e3);"></div>
<div class="r" style="left:518px;top:375px;width:5px;height:1px;background:#3d5a9e;"></div>
<div class="r" style="left:531px;top:370px;width:10px;height:10px;background:#fff;border:1px solid #000;"></div>
<div class="t" style="left:547px;top:369.62px;font-size:10.75px;line-height:10.75px;color:#000;letter-spacing:0.039px;">Structure Output</div>
<div class="r" style="left:532px;top:387px;width:9px;height:9px;border:1px solid #a3a3a3;border-radius:1px;background:linear-gradient(#ffffff,#e3e3e3);"></div>
<div class="r" style="left:534px;top:391px;width:5px;height:1px;background:#3d5a9e;"></div>
<div class="r" style="left:547px;top:386px;width:10px;height:10px;background:#fff;border:1px solid #000;"></div>
<div class="t" style="left:563px;top:385.62px;font-size:10.75px;line-height:10.75px;color:#1515ff;letter-spacing:-0.228px;">Base Reactions</div>
<div class="r" style="left:563px;top:402px;width:10px;height:10px;background:#fff;border:1px solid #000;"></div>
<div class="t" style="left:579px;top:401.62px;font-size:10.75px;line-height:10.75px;color:#000;letter-spacing:-0.171px;">Table:  Base Reactions</div>
<div class="r" style="left:516px;top:419px;width:9px;height:9px;border:1px solid #a3a3a3;border-radius:1px;background:linear-gradient(#ffffff,#e3e3e3);"></div>
<div class="r" style="left:518px;top:423px;width:5px;height:1px;background:#3d5a9e;"></div>
<div class="r" style="left:531px;top:418px;width:10px;height:10px;background:#fff;border:1px solid #000;"></div>
<div class="t" style="left:547px;top:417.62px;font-size:10.75px;line-height:10.75px;color:#000;letter-spacing:-0.018px;">Analysis Result Summaries</div>
<div class="r" style="left:532px;top:435px;width:9px;height:9px;border:1px solid #a3a3a3;border-radius:1px;background:linear-gradient(#ffffff,#e3e3e3);"></div>
<div class="r" style="left:534px;top:439px;width:5px;height:1px;background:#3d5a9e;"></div>
<div class="r" style="left:547px;top:434px;width:10px;height:10px;background:#fff;border:1px solid #000;"></div>
<div class="t" style="left:563px;top:433.62px;font-size:10.75px;line-height:10.75px;color:#1515ff;letter-spacing:-0.294px;">Analysis Result Summaries</div>
<div class="r" style="left:563px;top:450px;width:10px;height:10px;background:#fff;border:1px solid #000;"></div>
<div class="t" style="left:579px;top:449.62px;font-size:10.75px;line-height:10.75px;color:#000;letter-spacing:-0.253px;">Table:  Strip Forces Summary</div>
<div class="r" style="left:563px;top:466px;width:10px;height:10px;background:#fff;border:1px solid #000;"></div>
<div class="t" style="left:579px;top:465.62px;font-size:10.75px;line-height:10.75px;color:#000;letter-spacing:-0.15px;">Table:  Slab Panel Geometry</div>
<div class="r" style="left:516px;top:483px;width:9px;height:9px;border:1px solid #a3a3a3;border-radius:1px;background:linear-gradient(#ffffff,#e3e3e3);"></div>
<div class="r" style="left:518px;top:487px;width:5px;height:1px;background:#3d5a9e;"></div>
<div class="r" style="left:520px;top:485px;width:1px;height:5px;background:#3d5a9e;"></div>
<div class="r" style="left:531px;top:482px;width:10px;height:10px;background:#fff;border:1px solid #000;"></div>
<div class="t" style="left:547px;top:481.62px;font-size:10.75px;line-height:10.75px;color:#000;letter-spacing:-0.05px;">Analysis Result Enveloping Summaries</div>
<div class="r" style="left:500px;top:499px;width:9px;height:9px;border:1px solid #a3a3a3;border-radius:1px;background:linear-gradient(#ffffff,#e3e3e3);"></div>
<div class="r" style="left:502px;top:503px;width:5px;height:1px;background:#3d5a9e;"></div>
<div class="r" style="left:515px;top:498px;width:10px;height:10px;background:#fff;border:1px solid #000;"></div>
<div class="t" style="left:531px;top:497.62px;font-size:10.75px;line-height:10.75px;color:#000;letter-spacing:-0.344px;">DESIGN DATA</div>
<div class="t" style="left:606px;top:497.62px;font-size:10.75px;line-height:10.75px;color:#000;letter-spacing:0.097px;">(0 of 9 tables selected)</div>
<div class="r" style="left:516px;top:515px;width:9px;height:9px;border:1px solid #a3a3a3;border-radius:1px;background:linear-gradient(#ffffff,#e3e3e3);"></div>
<div class="r" style="left:518px;top:519px;width:5px;height:1px;background:#3d5a9e;"></div>
<div class="r" style="left:531px;top:514px;width:10px;height:10px;background:#fff;border:1px solid #000;"></div>
<div class="t" style="left:547px;top:513.62px;font-size:10.75px;line-height:10.75px;color:#000;letter-spacing:-0.13px;">Design Definition Data</div>
<div class="r" style="left:532px;top:531px;width:9px;height:9px;border:1px solid #a3a3a3;border-radius:1px;background:linear-gradient(#ffffff,#e3e3e3);"></div>
<div class="r" style="left:534px;top:535px;width:5px;height:1px;background:#3d5a9e;"></div>
<div class="r" style="left:536px;top:533px;width:1px;height:5px;background:#3d5a9e;"></div>
<div class="r" style="left:547px;top:530px;width:10px;height:10px;background:#fff;border:1px solid #000;"></div>
<div class="t" style="left:563px;top:529.62px;font-size:10.75px;line-height:10.75px;color:#1515ff;letter-spacing:-0.162px;">Design Preferences</div>
<div class="r" style="left:532px;top:547px;width:9px;height:9px;border:1px solid #a3a3a3;border-radius:1px;background:linear-gradient(#ffffff,#e3e3e3);"></div>
<div class="r" style="left:534px;top:551px;width:5px;height:1px;background:#3d5a9e;"></div>
<div class="r" style="left:547px;top:546px;width:10px;height:10px;background:#fff;border:1px solid #000;"></div>
<div class="t" style="left:563px;top:545.62px;font-size:10.75px;line-height:10.75px;color:#1515ff;letter-spacing:-0.219px;">Frame Design Assignments</div>
<div class="r" style="left:563px;top:562px;width:10px;height:10px;background:#fff;border:1px solid #000;"></div>
<div class="t" style="left:579px;top:561.62px;font-size:10.75px;line-height:10.75px;color:#000;letter-spacing:-0.15px;">Table:  Concrete Beam Overwrites - ACI 318-14</div>
<div class="r" style="left:532px;top:579px;width:9px;height:9px;border:1px solid #a3a3a3;border-radius:1px;background:linear-gradient(#ffffff,#e3e3e3);"></div>
<div class="r" style="left:534px;top:583px;width:5px;height:1px;background:#3d5a9e;"></div>
<div class="r" style="left:536px;top:581px;width:1px;height:5px;background:#3d5a9e;"></div>
<div class="r" style="left:547px;top:578px;width:10px;height:10px;background:#fff;border:1px solid #000;"></div>
<div class="t" style="left:563px;top:577.62px;font-size:10.75px;line-height:10.75px;color:#1515ff;letter-spacing:-0.147px;">Area/Strip/Punching Design Assignments</div>
<div class="r" style="left:532px;top:595px;width:9px;height:9px;border:1px solid #a3a3a3;border-radius:1px;background:linear-gradient(#ffffff,#e3e3e3);"></div>
<div class="r" style="left:534px;top:599px;width:5px;height:1px;background:#3d5a9e;"></div>
<div class="r" style="left:536px;top:597px;width:1px;height:5px;background:#3d5a9e;"></div>
<div class="r" style="left:547px;top:594px;width:10px;height:10px;background:#fff;border:1px solid #000;"></div>
<div class="t" style="left:563px;top:593.62px;font-size:10.75px;line-height:10.75px;color:#1515ff;letter-spacing:-0.166px;">Design Load Combinations</div>
<div class="r" style="left:828px;top:63px;width:164px;height:58px;background:transparent;border:1px solid #dcdcdc;"></div>
<div class="r" style="left:835px;top:57px;width:133px;height:12px;background:#f0f0f0;"></div>
<div class="t" style="left:837px;top:58.62px;font-size:10.75px;line-height:10.75px;color:#00008f;letter-spacing:-0.003px;">Load Patterns (Model Def.)</div>
<div class="r" style="left:843px;top:79px;width:138px;height:21px;background:#e1e1e1;border:1px solid #adadad;"></div>
<div class="t" style="left:814.3px;top:84.12px;font-size:10.75px;line-height:10.75px;color:#000;width:200px;text-align:center;letter-spacing:-0.007px;">Select Load Patterns...</div>
<div class="r" style="left:845px;top:116px;width:137px;height:8px;background:#f0f0f0;"></div>
<div class="t" style="left:845px;top:104.62px;font-size:10.75px;line-height:10.75px;color:#000;letter-spacing:0.052px;">4 of 4 Selected</div>
<div class="r" style="left:828px;top:132px;width:164px;height:170px;background:transparent;border:1px solid #dcdcdc;"></div>
<div class="r" style="left:835px;top:126px;width:109px;height:12px;background:#f0f0f0;"></div>
<div class="t" style="left:837px;top:127.62px;font-size:10.75px;line-height:10.75px;color:#00008f;letter-spacing:0.056px;">Load Cases (Results)</div>
<div class="r" style="left:843px;top:148px;width:138px;height:21px;background:#e1e1e1;border:1px solid #adadad;"></div>
<div class="t" style="left:814px;top:153.12px;font-size:10.75px;line-height:10.75px;color:#000;width:200px;text-align:center;letter-spacing:0.020px;">Select Load Cases...</div>
<div class="t" style="left:845px;top:173.62px;font-size:10.75px;line-height:10.75px;color:#000;letter-spacing:0.052px;">3 of 3 Selected</div>
<div class="r" style="left:843px;top:200px;width:138px;height:21px;background:#e1e1e1;border:1px solid #adadad;"></div>
<div class="t" style="left:814.5px;top:205.12px;font-size:10.75px;line-height:10.75px;color:#000;width:200px;text-align:center;letter-spacing:-0.110px;">Select Combos...</div>
<div class="t" style="left:845px;top:225.62px;font-size:10.75px;line-height:10.75px;color:#000;letter-spacing:0.052px;">2 of 2 Selected</div>
<div class="r" style="left:843px;top:252px;width:138px;height:21px;background:#e1e1e1;border:1px solid #adadad;"></div>
<div class="t" style="left:814.5px;top:257.12px;font-size:10.75px;line-height:10.75px;color:#000;width:200px;text-align:center;letter-spacing:0.089px;">Modify/Show Options...</div>
<div class="r" style="left:828px;top:312px;width:164px;height:121px;background:transparent;border:1px solid #dcdcdc;"></div>
<div class="r" style="left:835px;top:306px;width:41px;height:12px;background:#f0f0f0;"></div>
<div class="t" style="left:837px;top:307.62px;font-size:10.75px;line-height:10.75px;color:#00008f;letter-spacing:-0.038px;">Options</div>
<div class="r" style="left:837px;top:329px;width:13px;height:13px;background:#fff;border:1px solid #d2d2d2;"></div>
<div class="t" style="left:859px;top:330.12px;font-size:10.75px;line-height:10.75px;color:#a0a0a0;letter-spacing:-0.059px;">Selection Only</div>
<div class="r" style="left:837px;top:345px;width:13px;height:13px;background:#fff;border:1px solid #333;"></div>
<div class="t" style="left:859px;top:346.12px;font-size:10.75px;line-height:10.75px;color:#000;letter-spacing:0.092px;">Show Unformatted</div>
<div class="r" style="left:828px;top:443px;width:164px;height:45px;background:transparent;border:1px solid #dcdcdc;"></div>
<div class="r" style="left:835px;top:437px;width:62px;height:12px;background:#f0f0f0;"></div>
<div class="t" style="left:837px;top:438.62px;font-size:10.75px;line-height:10.75px;color:#00008f;letter-spacing:-0.166px;">Named Sets</div>
<div class="r" style="left:843px;top:459px;width:138px;height:21px;background:#cccccc;border:1px solid #bfbfbf;"></div>
<div class="t" style="left:814.3px;top:464.12px;font-size:10.75px;line-height:10.75px;color:#a0a0a0;width:200px;text-align:center;letter-spacing:-0.025px;">Show Named Set...</div>
<div class="r" style="left:842px;top:595px;width:67px;height:21px;background:#cccccc;border:1px solid #bfbfbf;"></div>
<div class="t" style="left:775px;top:600.12px;font-size:10.75px;line-height:10.75px;color:#a0a0a0;width:200px;text-align:center;letter-spacing:-0.123px;">OK</div>
<div class="r" style="left:918px;top:595px;width:67px;height:21px;background:#e1e1e1;border:1px solid #adadad;"></div>
<div class="t" style="left:851px;top:600.12px;font-size:10.75px;line-height:10.75px;color:#000;width:200px;text-align:center;letter-spacing:-0.045px;">Cancel</div>
<div class="r" style="left:494px;top:620px;width:130px;height:21px;background:#e1e1e1;border:1px solid #adadad;"></div>
<div class="t" style="left:458.29999999999995px;top:625.12px;font-size:10.75px;line-height:10.75px;color:#000;width:200px;text-align:center;letter-spacing:-0.175px;">Table Format File...</div>
<div class="t" style="left:632px;top:625.62px;font-size:10.75px;line-height:10.75px;color:#000;letter-spacing:-0.083px;">Current Table Format File:  None - Program Default</div>
</body></html>
